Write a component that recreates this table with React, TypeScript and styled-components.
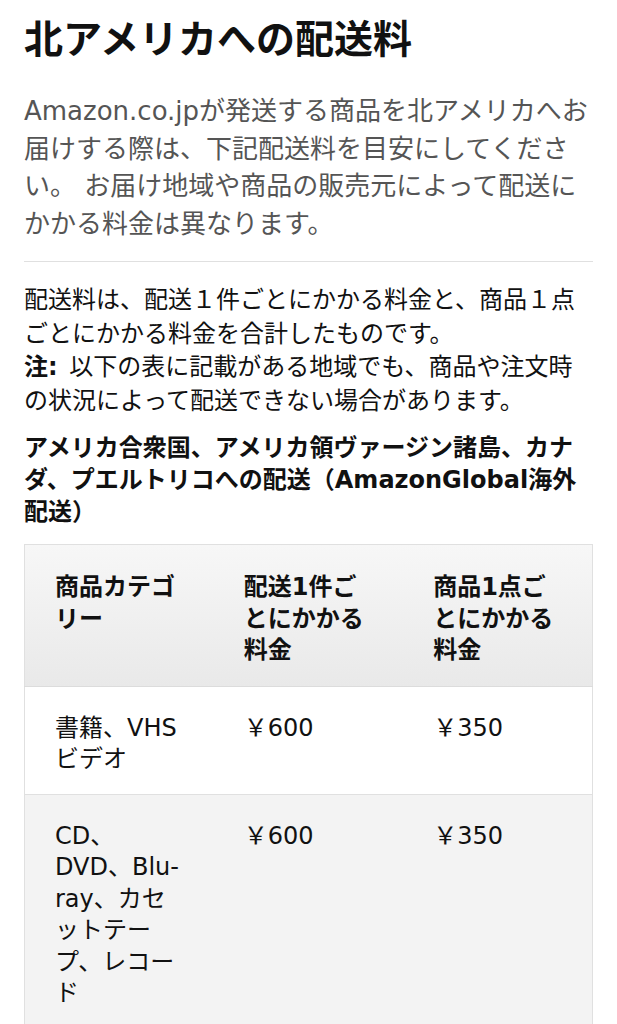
import styled, { createGlobalStyle } from 'styled-components'

const GlobalStyle = createGlobalStyle`
  body {
    margin: 0;
    background: #fff;
    font-family: "DejaVu Sans", "Noto Sans CJK JP", sans-serif;
    color: #111;
  }
`

const Page = styled.div`
  padding: 17px 24px 0;
`

const Title = styled.h1`
  margin: 0;
  font-size: 39px;
  line-height: 46px;
  font-weight: 700;
  color: #111;
`

const Lead = styled.p`
  margin: 30px 0 0;
  font-size: 26px;
  line-height: 37.5px;
  color: #555;
`

const Divider = styled.hr`
  margin: 18px 0 0;
  border: none;
  border-top: 1px solid #e0e0e0;
`

const Body = styled.p`
  margin: 22px 0 0;
  font-size: 24px;
  line-height: 33.5px;
  color: #111;
`

const NoteLabel = styled.b`
  font-weight: 700;
  padding-right: 4px;
`

const Heading = styled.h3`
  margin: 14px 0 0;
  font-size: 24px;
  line-height: 32px;
  font-weight: 700;
`

const Table = styled.table`
  margin-top: 16px;
  width: 100%;
  table-layout: fixed;
  border-collapse: collapse;
  border: 1px solid #e0e0e0;
`

const HeadRow = styled.tr`
  background: linear-gradient(to bottom, #f7f7f7, #e9e9e9);
  border-bottom: 1px solid #dcdcdc;
`

const Row = styled.tr<{ $alt?: boolean }>`
  background: ${(p) => (p.$alt ? '#f3f3f3' : '#fff')};
  border-bottom: 1px solid #e0e0e0;
`

const HeadCell = styled.th`
  text-align: left;
  vertical-align: top;
  padding: 27px 30px 19px;
  font-size: 24px;
  line-height: 31.5px;
  font-weight: 700;
  color: #111;
`

const Cell = styled.td`
  vertical-align: top;
  padding: 26px 30px 18px;
  font-size: 24px;
  line-height: 31.5px;
  color: #111;
`

const rows = [
  { category: '書籍、VHSビデオ', perShipment: '￥600', perItem: '￥350' },
  {
    category: 'CD、DVD、Blu-ray、カセットテープ、レコード',
    perShipment: '￥600',
    perItem: '￥350',
  },
]

export default function App() {
  return (
    <>
      <GlobalStyle />
      <Page>
        <Title>北アメリカへの配送料</Title>
        <Lead>
          Amazon.co.jpが発送する商品を北アメリカへお届けする際は、下記配送料を目安にしてください。
          お届け地域や商品の販売元によって配送にかかる料金は異なります。
        </Lead>
        <Divider />
        <Body>
          配送料は、配送１件ごとにかかる料金と、商品１点ごとにかかる料金を合計したものです。
          <br />
          <NoteLabel>注:</NoteLabel> 以下の表に記載がある地域でも、商品や注文時の状況によって配送できない場合があります。
        </Body>
        <Heading>
          アメリカ合衆国、アメリカ領ヴァージン諸島、カナダ、プエルトリコへの配送（AmazonGlobal海外配送）
        </Heading>
        <Table>
          <thead>
            <HeadRow>
              <HeadCell>商品カテゴリー</HeadCell>
              <HeadCell>配送1件ごとにかかる料金</HeadCell>
              <HeadCell>商品1点ごとにかかる料金</HeadCell>
            </HeadRow>
          </thead>
          <tbody>
            {rows.map((r, i) => (
              <Row key={i} $alt={i % 2 === 1}>
                <Cell>{r.category}</Cell>
                <Cell>{r.perShipment}</Cell>
                <Cell>{r.perItem}</Cell>
              </Row>
            ))}
          </tbody>
        </Table>
      </Page>
    </>
  )
}
